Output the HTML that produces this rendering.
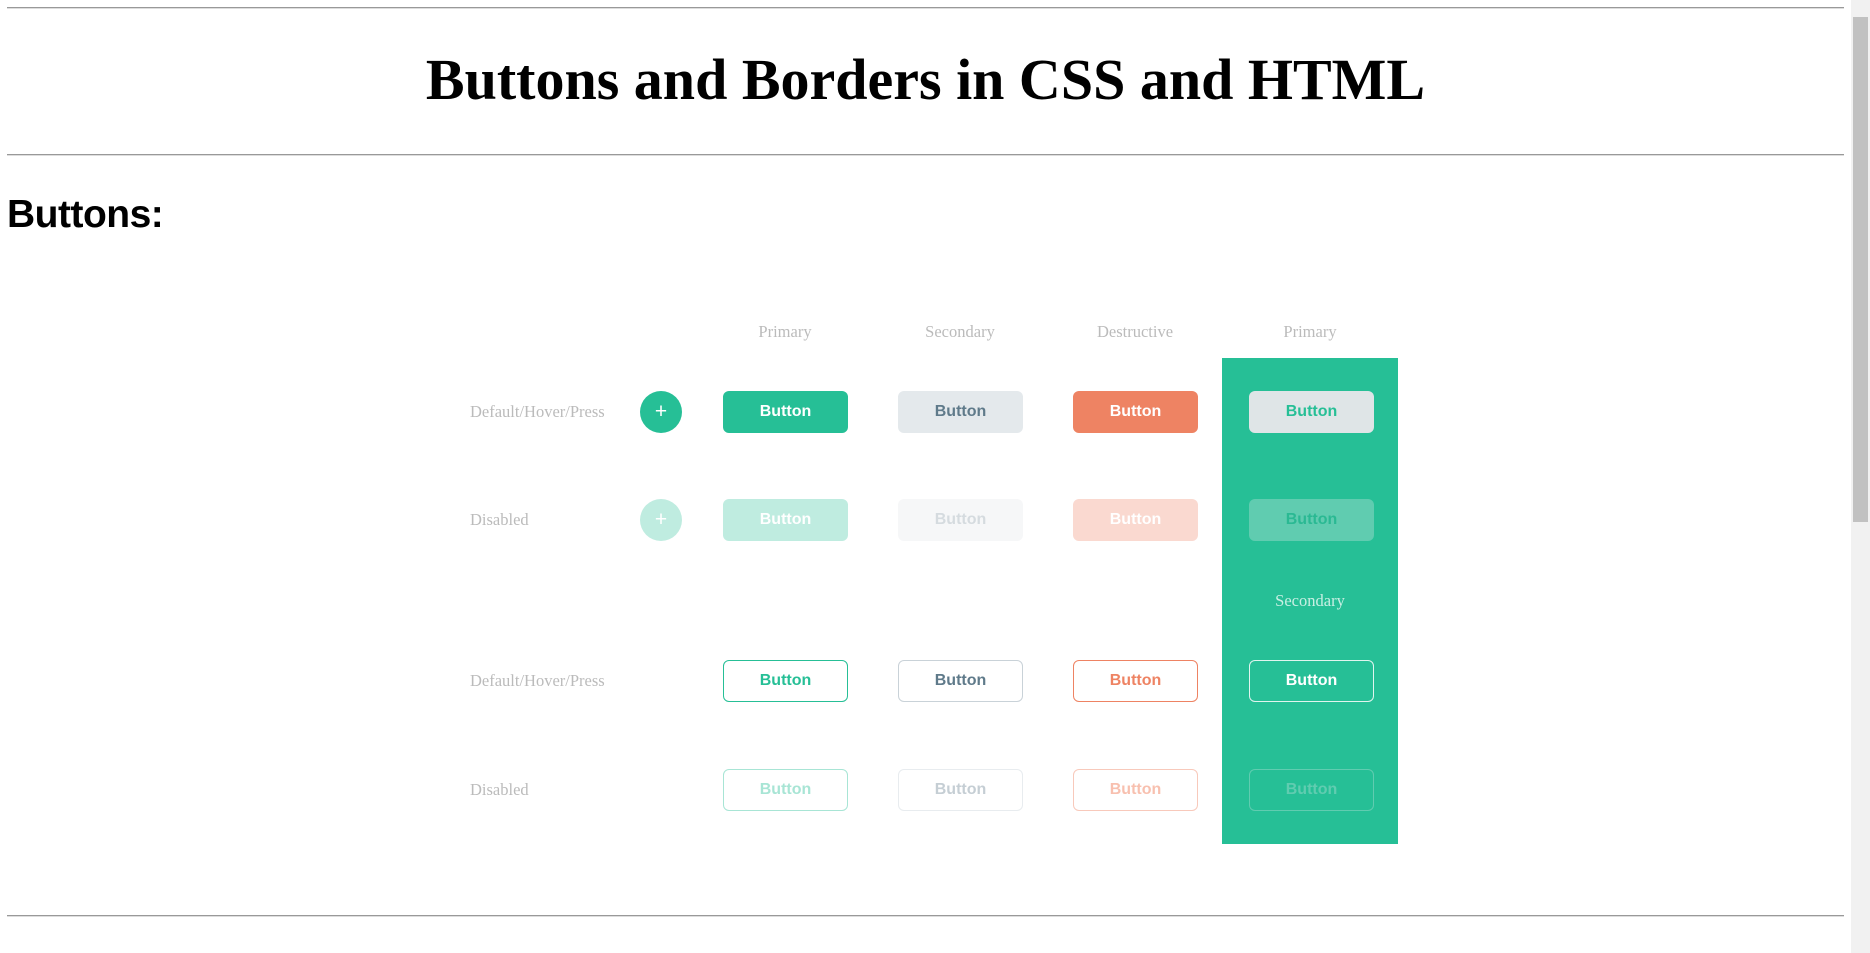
<!DOCTYPE html>
<html><head><meta charset="utf-8"><style>
html,body{margin:0;padding:0;background:#fff;width:1870px;height:953px;overflow:hidden;position:relative}
.hr{position:absolute;left:7px;width:1837px;height:1px;background:#999;border-bottom:1px solid #ddd}
h1{position:absolute;top:40px;left:0;width:1851px;margin:0;text-align:center;font:bold 58px "Liberation Serif",serif;line-height:80px}
h2{position:absolute;top:190px;left:7px;margin:0;font:bold 39px "Liberation Sans",sans-serif;letter-spacing:-0.5px;line-height:50px}
.lbl{position:absolute;font:16.5px "Liberation Serif",serif;color:#bbb;transform:translate(-50%,-50%);white-space:nowrap}
.rl{position:absolute;left:470px;font:16.5px "Liberation Serif",serif;color:#bbb;transform:translateY(-50%)}
.panel{position:absolute;left:1222px;top:358px;width:176px;height:486px;background:#26bf96}
.b{position:absolute;width:125px;height:42px;border-radius:6px;box-sizing:border-box;font:bold 16px "Liberation Sans",sans-serif;display:flex;align-items:center;justify-content:center;transform:translateY(-50%)}
.c{position:absolute;left:640px;width:42px;height:42px;border-radius:50%;color:#fff;font:21px "Liberation Sans",sans-serif;display:flex;align-items:center;justify-content:center;transform:translateY(-50%)}
.sb{position:absolute;right:0;top:0;width:19px;height:953px;background:#f1f1f1}
.th{position:absolute;right:2px;top:17px;width:15px;height:505px;background:#c1c1c1}
</style></head><body>
<div class="hr" style="top:7px"></div>
<h1>Buttons and Borders in CSS and HTML</h1>
<div class="hr" style="top:154px"></div>
<h2>Buttons:</h2>
<div class="panel"></div>
<div class="lbl" style="left:785px;top:332px">Primary</div>
<div class="lbl" style="left:960px;top:332px">Secondary</div>
<div class="lbl" style="left:1135px;top:332px">Destructive</div>
<div class="lbl" style="left:1310px;top:332px">Primary</div>
<div class="lbl" style="left:1310px;top:601px;color:#c8efe3">Secondary</div>

<div class="rl" style="top:412px">Default/Hover/Press</div>
<div class="rl" style="top:520px">Disabled</div>
<div class="rl" style="top:681px">Default/Hover/Press</div>
<div class="rl" style="top:790px">Disabled</div>

<div class="c" style="top:412px;background:#26bf96">+</div>
<div class="c" style="top:520px;background:#bfece0">+</div>

<div class="b" style="left:723px;top:412px;background:#26bf96;color:#fff">Button</div>
<div class="b" style="left:898px;top:412px;background:#e4e9ec;color:#5f7a8a">Button</div>
<div class="b" style="left:1073px;top:412px;background:#ee8363;color:#fff">Button</div>
<div class="b" style="left:1249px;top:412px;background:#dfe5e7;color:#26bf96">Button</div>

<div class="b" style="left:723px;top:520px;background:#bfece0;color:#fff">Button</div>
<div class="b" style="left:898px;top:520px;background:#f6f7f8;color:#d5dbdf">Button</div>
<div class="b" style="left:1073px;top:520px;background:#fad9d0;color:#fff">Button</div>
<div class="b" style="left:1249px;top:520px;background:#60ccb0;color:#2ab993">Button</div>

<div class="b" style="left:723px;top:681px;border:1px solid #26bf96;color:#26bf96">Button</div>
<div class="b" style="left:898px;top:681px;border:1px solid #c9d2d8;color:#5f7a8a">Button</div>
<div class="b" style="left:1073px;top:681px;border:1px solid #ee8363;color:#ee8363">Button</div>
<div class="b" style="left:1249px;top:681px;border:1px solid #e0f5ef;color:#fff">Button</div>

<div class="b" style="left:723px;top:790px;border:1px solid #a8e5d5;color:#a8e5d5">Button</div>
<div class="b" style="left:898px;top:790px;border:1px solid #e8ecef;color:#c5ced4">Button</div>
<div class="b" style="left:1073px;top:790px;border:1px solid #f8c9bb;color:#f8c0af">Button</div>
<div class="b" style="left:1249px;top:790px;border:1px solid #60ccb0;color:#60ccb0">Button</div>

<div class="hr" style="top:915px"></div>
<div class="sb"><div class="th"></div></div>
</body></html>
